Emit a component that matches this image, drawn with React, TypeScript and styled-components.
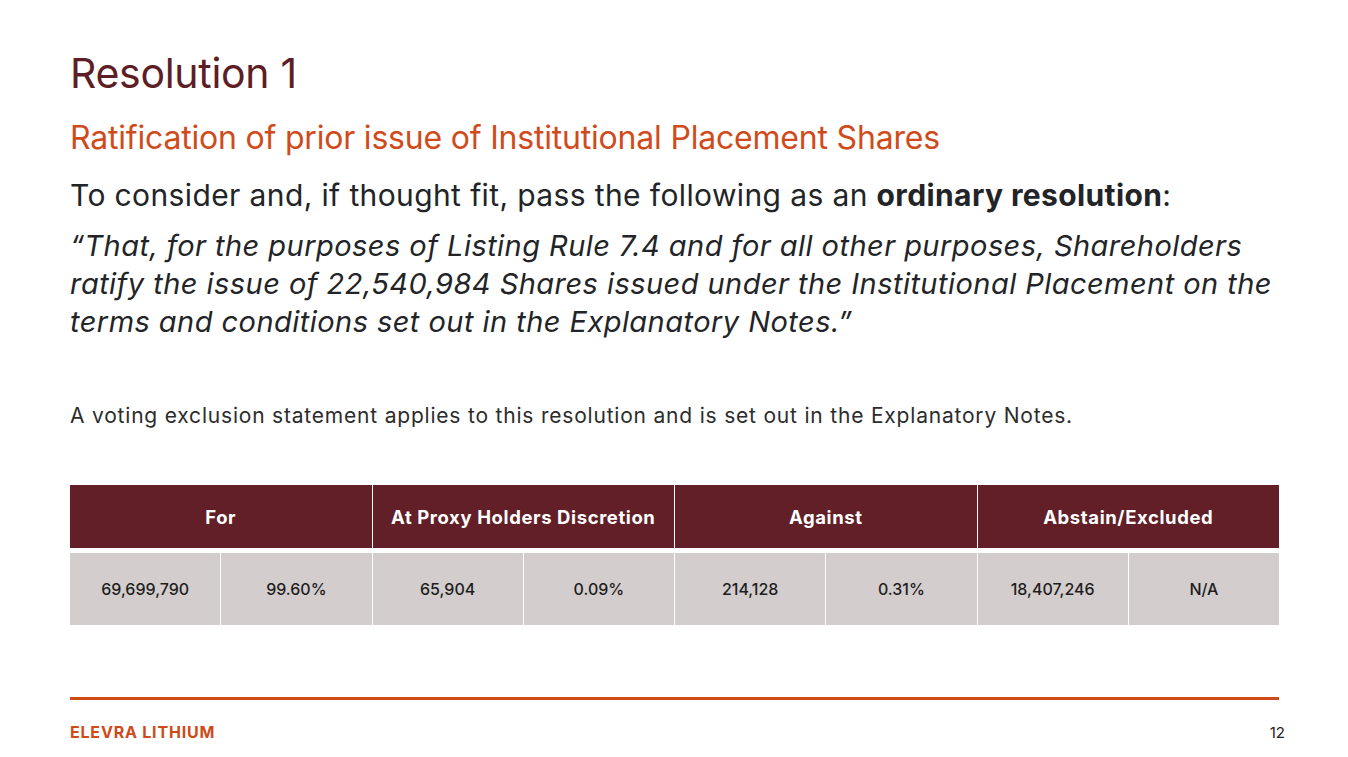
import React from 'react';
import styled, { createGlobalStyle } from 'styled-components';

const GlobalStyle = createGlobalStyle`
  html, body {
    margin: 0;
    padding: 0;
    background: #ffffff;
  }
  body {
    font-family: Inter, "Noto Sans", "Liberation Sans", sans-serif;
  }
`;

interface VoteGroup {
  label: string;
  count: string;
  share: string;
}

const groups: VoteGroup[] = [
  { label: 'For', count: '69,699,790', share: '99.60%' },
  { label: 'At Proxy Holders Discretion', count: '65,904', share: '0.09%' },
  { label: 'Against', count: '214,128', share: '0.31%' },
  { label: 'Abstain/Excluded', count: '18,407,246', share: 'N/A' },
];

const App = () => {
  return (
    <>
      <GlobalStyle />
      <Slide>
        <Main>
          <Title>Resolution 1</Title>
          <Subtitle>Ratification of prior issue of Institutional Placement Shares</Subtitle>
          <Lead>
            To consider and, if thought fit, pass the following as an <strong>ordinary resolution</strong>:
          </Lead>
          <Quote>
            “That, for the purposes of Listing Rule 7.4 and for all other purposes, Shareholders
            <br />
            ratify the issue of 22,540,984 Shares issued under the Institutional Placement on the
            <br />
            terms and conditions set out in the Explanatory Notes.”
          </Quote>
          <Note>A voting exclusion statement applies to this resolution and is set out in the Explanatory Notes.</Note>

          <Table>
            <HeaderRow>
              {groups.map((g) => (
                <HeadCell key={g.label}>{g.label}</HeadCell>
              ))}
            </HeaderRow>
            <BodyRow>
              {groups.map((g) => (
                <React.Fragment key={g.label}>
                  <Cell>{g.count}</Cell>
                  <Cell>{g.share}</Cell>
                </React.Fragment>
              ))}
            </BodyRow>
          </Table>
        </Main>

        <Footer>
          <Rule />
          <FooterRow>
            <Brand>ELEVRA LITHIUM</Brand>
            <PageNo>12</PageNo>
          </FooterRow>
        </Footer>
      </Slide>
    </>
  );
};

const Slide = styled.div`
  width: 1348px;
  height: 757px;
  box-sizing: border-box;
  padding: 48px 69px 0 70px;
  display: flex;
  flex-direction: column;
  overflow: hidden;
`;

const Main = styled.div`
  flex: 1;
  display: flex;
  flex-direction: column;
`;

const Title = styled.h1`
  margin: 0;
  font-size: 41px;
  line-height: 50px;
  font-weight: 400;
  color: #5e1e26;
  letter-spacing: -0.3px;
`;

const Subtitle = styled.h2`
  margin: 20px 0 0;
  font-size: 32px;
  line-height: 40px;
  font-weight: 400;
  color: #d04b1b;
  letter-spacing: -0.2px;
`;

const Lead = styled.p`
  margin: 18px 0 0;
  font-size: 30px;
  line-height: 38px;
  color: #222428;
  letter-spacing: 0.38px;
  strong {
    font-weight: 700;
  }
`;

const Quote = styled.p`
  margin: 13px 0 0;
  font-size: 29px;
  line-height: 38px;
  font-style: italic;
  color: #222428;
  letter-spacing: 0.45px;
  white-space: nowrap;
`;

const Note = styled.p`
  margin: 61px 0 0;
  font-size: 21px;
  line-height: 28px;
  color: #2c2c2c;
  letter-spacing: 0.8px;
`;

const Table = styled.div`
  margin-top: 55px;
  width: 1209px;
  display: flex;
  flex-direction: column;
  gap: 5px;
`;

const HeaderRow = styled.div`
  display: grid;
  grid-template-columns: repeat(4, 1fr);
  height: 63px;
  gap: 1px;
  background: #ffffff;
`;

const HeadCell = styled.div`
  background: #621f27;
  color: #ffffff;
  font-size: 18.5px;
  font-weight: 700;
  letter-spacing: 0.6px;
  display: flex;
  align-items: center;
  justify-content: center;
`;

const BodyRow = styled.div`
  display: grid;
  grid-template-columns: repeat(8, 1fr);
  height: 72px;
  gap: 1px;
  background: #ffffff;
`;

const Cell = styled.div`
  background: #d3cdcd;
  color: #1e1e1e;
  font-size: 16px;
  font-weight: 500;
  display: flex;
  align-items: center;
  justify-content: center;
`;

const Footer = styled.div`
  display: flex;
  flex-direction: column;
  padding-bottom: 15px;
`;

const Rule = styled.div`
  width: 1209px;
  height: 3px;
  background: #cf4a19;
`;

const FooterRow = styled.div`
  display: flex;
  justify-content: space-between;
  align-items: center;
  margin-top: 22px;
  height: 20px;
  width: 1215px;
`;

const Brand = styled.span`
  color: #cf4a19;
  font-size: 16px;
  font-weight: 700;
  letter-spacing: 0.8px;
`;

const PageNo = styled.span`
  color: #222;
  font-size: 15px;
`;

export default App;
